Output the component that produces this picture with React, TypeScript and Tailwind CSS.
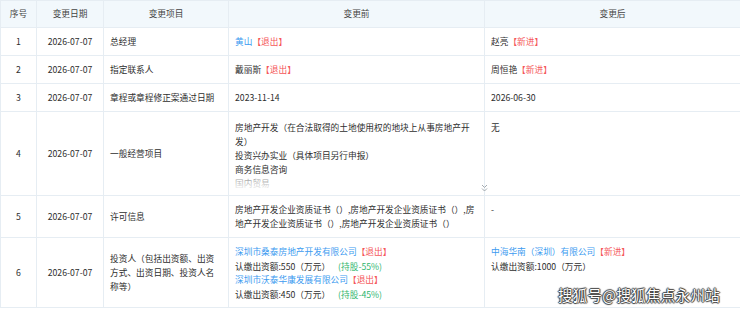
import React from "react";

const BLUE = "text-[#3d9bf0]";
const RED = "text-[#f5575a]";
const GREEN = "text-[#2fb66f]";

function Out() {
  return <span className={RED}>【退出】</span>;
}
function In() {
  return <span className={RED}>【新进】</span>;
}

const td = "border border-[#e6edf3] align-middle";
const tdTop = "border border-[#e6edf3] align-top px-[6px] pt-[7px] pb-[6px]";

export default function App() {
  return (
    <div
      className="relative w-[740px] h-[309px] overflow-hidden bg-white text-[#2e2e2e] text-[8.7px] leading-[14px]"
      style={{ fontFamily: '"Noto Sans CJK SC", "Microsoft YaHei", sans-serif' }}
    >
      <table className="w-[740px] table-fixed border-collapse">
        <colgroup>
          <col className="w-[36px]" />
          <col className="w-[67px]" />
          <col className="w-[125px]" />
          <col className="w-[256px]" />
          <col className="w-[256px]" />
        </colgroup>
        <thead>
          <tr className="h-[27px] bg-[#f2f8fc] text-[#444]">
            <th className="border border-[#e6edf3] font-normal text-center">序号</th>
            <th className="border border-[#e6edf3] font-normal text-center">变更日期</th>
            <th className="border border-[#e6edf3] font-normal text-center">变更项目</th>
            <th className="border border-[#e6edf3] font-normal text-center">变更前</th>
            <th className="border border-[#e6edf3] font-normal text-center">变更后</th>
          </tr>
        </thead>
        <tbody>
          <tr className="h-[27px]">
            <td className={`${td} text-center`}>1</td>
            <td className={`${td} text-center`}>2026-07-07</td>
            <td className={`${td} px-[6px]`}>总经理</td>
            <td className={tdTop}>
              <span className={BLUE}>黄山</span>
              <Out />
            </td>
            <td className={tdTop}>
              赵亮
              <In />
            </td>
          </tr>
          <tr className="h-[27px]">
            <td className={`${td} text-center`}>2</td>
            <td className={`${td} text-center`}>2026-07-07</td>
            <td className={`${td} px-[6px]`}>指定联系人</td>
            <td className={tdTop}>
              戴丽斯
              <Out />
            </td>
            <td className={tdTop}>
              周恒艳
              <In />
            </td>
          </tr>
          <tr className="h-[27px]">
            <td className={`${td} text-center`}>3</td>
            <td className={`${td} text-center`}>2026-07-07</td>
            <td className={`${td} px-[6px]`}>章程或章程修正案通过日期</td>
            <td className={tdTop}>2023-11-14</td>
            <td className={tdTop}>2026-06-30</td>
          </tr>
          <tr className="h-[84px]">
            <td className={`${td} text-center`}>4</td>
            <td className={`${td} text-center`}>2026-07-07</td>
            <td className={`${td} px-[6px]`}>一般经营项目</td>
            <td className="relative border border-[#e6edf3] align-top px-[6px] pt-[9px] pb-[4px]">
              <div className="relative h-[70px] overflow-hidden whitespace-nowrap">
                <div>房地产开发（在合法取得的土地使用权的地块上从事房地产开</div>
                <div>发）</div>
                <div>投资兴办实业（具体项目另行申报）</div>
                <div>商务信息咨询</div>
                <div>国内贸易</div>
                <div className="absolute left-0 right-0 bottom-0 h-[16px] bg-gradient-to-b from-white/40 to-white" />
              </div>
              <svg
                className="absolute right-[-4px] bottom-[3px]"
                width="7"
                height="8"
                viewBox="0 0 7 8"
                fill="none"
                stroke="#9aa0a6"
                strokeWidth="0.9"
              >
                <path d="M1 1 L3.5 3.5 L6 1" />
                <path d="M1 4.5 L3.5 7 L6 4.5" />
              </svg>
            </td>
            <td className="border border-[#e6edf3] align-top px-[6px] pt-[9px]">无</td>
          </tr>
          <tr className="h-[41px]">
            <td className={`${td} text-center`}>5</td>
            <td className={`${td} text-center`}>2026-07-07</td>
            <td className={`${td} px-[6px]`}>许可信息</td>
            <td className={`${tdTop} whitespace-nowrap`}>
              <div>房地产开发企业资质证书（）,房地产开发企业资质证书（）,房</div>
              <div>地产开发企业资质证书（）,房地产开发企业资质证书（）</div>
            </td>
            <td className={tdTop}>-</td>
          </tr>
          <tr className="h-[70px]">
            <td className={`${td} text-center`}>6</td>
            <td className={`${td} text-center`}>2026-07-07</td>
            <td className={`${td} px-[6px] whitespace-nowrap`}>
              <div>投资人（包括出资额、出资</div>
              <div>方式、出资日期、投资人名</div>
              <div>称等）</div>
            </td>
            <td className="border border-[#e6edf3] align-top px-[6px] pt-[7px] whitespace-nowrap">
              <div>
                <span className={BLUE}>深圳市桑泰房地产开发有限公司</span>
                <Out />
              </div>
              <div className="mt-[1px]">
                认缴出资额:550（万元）<span className={`${GREEN} ml-[8px]`}>(持股-55%)</span>
              </div>
              <div className="mt-[-1px]">
                <span className={BLUE}>深圳市沃泰华康发展有限公司</span>
                <Out />
              </div>
              <div className="mt-[1px]">
                认缴出资额:450（万元）<span className={`${GREEN} ml-[8px]`}>(持股-45%)</span>
              </div>
            </td>
            <td className="border border-[#e6edf3] align-top px-[6px] pt-[7px] whitespace-nowrap">
              <div>
                <span className={BLUE}>中海华南（深圳）有限公司</span>
                <In />
              </div>
              <div className="mt-[1px]">认缴出资额:1000（万元）</div>
            </td>
          </tr>
        </tbody>
      </table>
      <div className="absolute right-[20px] bottom-[5px] text-[14.5px] leading-[18px] text-white tracking-[0.3px] [text-shadow:0_0_1px_#222,1px_0_1px_#444,-1px_0_1px_#444,0_1px_1px_#444,0_-1px_1px_#444]">
        搜狐号@搜狐焦点永州站
      </div>
    </div>
  );
}
